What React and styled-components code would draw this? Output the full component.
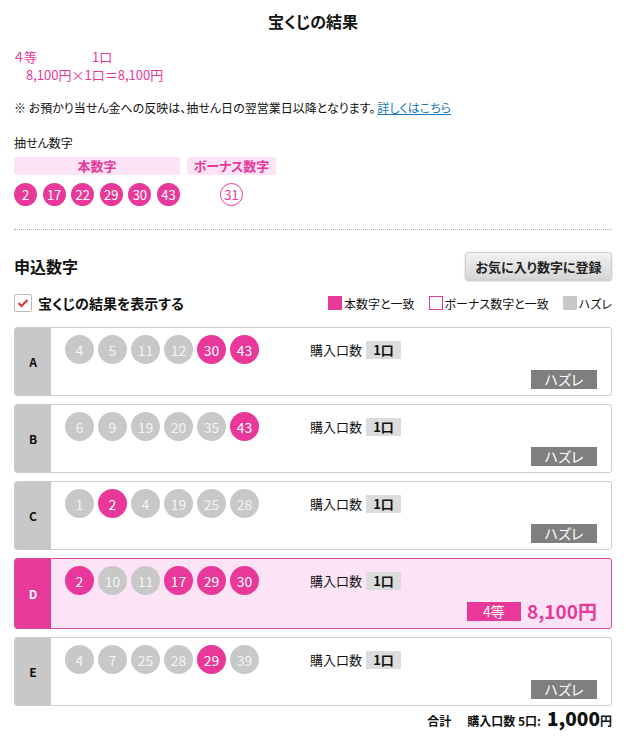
import React from "react";
import styled, { createGlobalStyle } from "styled-components";

const PINK = "#e8399a";
const LIGHT_PINK = "#fde3f6";

const GlobalStyle = createGlobalStyle`
    html, body {
        margin: 0;
        padding: 0;
        background: #fff;
    }
    body {
        font-family: "Noto Sans CJK JP", "Noto Sans", sans-serif;
        font-feature-settings: "palt";
        color: #111;
    }
`;

const Page = styled.div`
    width: 598px;
    padding: 10px 14px 8px;
`;

const Title = styled.h1`
    margin: 0;
    font-size: 16px;
    line-height: 22px;
    font-weight: 700;
    text-align: center;
`;

const Prize = styled.div`
    margin-top: 16px;
    color: ${PINK};
    font-size: 13px;
    line-height: 18px;
`;

const PrizeHead = styled.div`
    display: grid;
    grid-template-columns: 78px auto;
`;

const PrizeCalc = styled.div`
    padding-left: 12px;
`;

const Note = styled.p`
    margin: 16px 0 0;
    font-size: 12px;
    line-height: 16px;
    & a {
        color: #1a78b8;
        text-decoration: underline;
        margin-left: 2px;
    }
`;

const DrawLabel = styled.div`
    margin-top: 19px;
    font-size: 12px;
    line-height: 16px;
`;

const DrawGrid = styled.div`
    margin-top: 6px;
    display: grid;
    grid-template-columns: 166px 89px;
    column-gap: 7px;
    row-gap: 8px;
`;

const GroupLabel = styled.div`
    height: 18px;
    line-height: 18px;
    border-radius: 3px;
    background: ${LIGHT_PINK};
    color: ${PINK};
    font-size: 13px;
    font-weight: 700;
    text-align: center;
`;

const DrawBalls = styled.div`
    display: flex;
    justify-content: ${(p) => (p.$center ? "center" : "space-between")};
`;

const DrawBall = styled.span`
    width: 23px;
    height: 23px;
    box-sizing: border-box;
    border-radius: 50%;
    display: flex;
    align-items: center;
    justify-content: center;
    font-size: 13px;
    background: ${(p) => (p.$outline ? "#fff" : PINK)};
    color: ${(p) => (p.$outline ? PINK : "#fff")};
    border: ${(p) => (p.$outline ? `1px solid ${PINK}` : "none")};
`;

const Divider = styled.hr`
    margin: 23px 0 0;
    border: none;
    border-top: 1px dotted #aaa;
`;

const SectionHead = styled.div`
    margin-top: 22px;
    display: flex;
    justify-content: space-between;
    align-items: center;
`;

const SectionTitle = styled.h2`
    margin: 0;
    font-size: 16px;
    font-weight: 700;
`;

const FavButton = styled.button`
    width: 147px;
    height: 28px;
    border: 1px solid #cfcfcf;
    border-radius: 3px;
    background: linear-gradient(#f2f2f2, #d6d6d6);
    box-shadow: 0 1px 2px rgba(0, 0, 0, 0.25);
    font-family: inherit;
    font-feature-settings: "palt";
    font-size: 13px;
    font-weight: 700;
    color: #222;
    padding: 0;
`;

const OptionRow = styled.div`
    margin-top: 13px;
    display: flex;
    justify-content: space-between;
    align-items: center;
`;

const CheckLabel = styled.label`
    display: flex;
    align-items: center;
    gap: 6px;
    font-size: 14px;
    font-weight: 700;
`;

const CheckBox = styled.span`
    width: 18px;
    height: 18px;
    box-sizing: border-box;
    border: 1px solid #bbb;
    border-radius: 2px;
    background: #fff;
    display: flex;
    align-items: center;
    justify-content: center;
`;

const Legend = styled.div`
    display: flex;
    align-items: center;
    gap: 14px;
    font-size: 12px;
`;

const LegendItem = styled.span`
    display: flex;
    align-items: center;
    gap: 2px;
`;

const Swatch = styled.span`
    width: 14px;
    height: 14px;
    box-sizing: border-box;
    background: ${(p) => (p.$kind === "main" ? PINK : p.$kind === "bonus" ? "#fff" : "#c8c8c8")};
    border: ${(p) => (p.$kind === "bonus" ? `1px solid ${PINK}` : "none")};
`;

const Cards = styled.div`
    margin-top: 14px;
    display: flex;
    flex-direction: column;
    gap: 8px;
`;

const Card = styled.div`
    display: flex;
    border: 1px solid ${(p) => (p.$win ? "#d25095" : "#cccccc")};
    border-radius: 3px;
    overflow: hidden;
    background: ${(p) => (p.$win ? LIGHT_PINK : "#fff")};
`;

const Band = styled.div`
    width: 36px;
    flex: none;
    display: flex;
    align-items: center;
    justify-content: center;
    background: ${(p) => (p.$win ? PINK : "#c8c8c8")};
    color: ${(p) => (p.$win ? "#fff" : "#111")};
    font-size: 12px;
    font-weight: 700;
`;

const CardBody = styled.div`
    flex: 1;
    padding: 7px 14px 6px 14px;
    display: flex;
    flex-direction: column;
    gap: 5px;
`;

const TopRow = styled.div`
    display: flex;
    align-items: center;
`;

const Balls = styled.div`
    display: flex;
    gap: 4px;
    width: 245px;
`;

const Ball = styled.span`
    width: 29px;
    height: 29px;
    border-radius: 50%;
    display: flex;
    align-items: center;
    justify-content: center;
    font-size: 14px;
    background: ${(p) => (p.$hit ? PINK : "#c8c8c8")};
    color: ${(p) => (p.$hit ? "#fff" : "#f4f4f4")};
`;

const Purchase = styled.div`
    display: flex;
    align-items: center;
    gap: 4px;
    font-size: 13px;
`;

const CountBadge = styled.span`
    width: 35px;
    height: 18px;
    line-height: 18px;
    text-align: center;
    background: #dcdcdc;
    font-weight: 700;
    font-size: 13px;
`;

const ResultRow = styled.div`
    display: flex;
    justify-content: flex-end;
    align-items: center;
    gap: 6px;
    min-height: 20px;
`;

const Tag = styled.span`
    width: ${(p) => (p.$win ? "54px" : "66px")};
    height: 19px;
    line-height: 19px;
    text-align: center;
    color: #fff;
    font-size: 14px;
    background: ${(p) => (p.$win ? PINK : "#7f7f7f")};
`;

const Amount = styled.span`
    color: ${PINK};
    font-size: 19px;
    font-weight: 700;
    line-height: 22px;
`;

const Total = styled.div`
    margin-top: 1px;
    display: flex;
    justify-content: flex-end;
    align-items: baseline;
    font-size: 12px;
    line-height: 22px;
    font-weight: 700;
    & b {
        font-size: 19px;
        margin-left: 6px;
    }
    & span {
        margin-left: 16px;
    }
`;

const MAIN = [2, 17, 22, 29, 30, 43];
const BONUS = 31;

const LINES = [
    { id: "A", nums: [4, 5, 11, 12, 30, 43] },
    { id: "B", nums: [6, 9, 19, 20, 35, 43] },
    { id: "C", nums: [1, 2, 4, 19, 25, 28] },
    { id: "D", nums: [2, 10, 11, 17, 29, 30], prize: "4等", amount: "8,100円" },
    { id: "E", nums: [4, 7, 25, 28, 29, 39] },
];

function Check() {
    return (
        <svg width="12" height="10" viewBox="0 0 12 10">
            <path d="M1.5 5 L4.5 8 L10.5 2" fill="none" stroke="#d8302e" strokeWidth="2" />
        </svg>
    );
}

export default function App() {
    return (
        <Page>
            <GlobalStyle />
            <Title>宝くじの結果</Title>
            <Prize>
                <PrizeHead>
                    <span>４等</span>
                    <span>1口</span>
                </PrizeHead>
                <PrizeCalc>8,100円×1口＝8,100円</PrizeCalc>
            </Prize>
            <Note>
                ※ お預かり当せん金への反映は、抽せん日の翌営業日以降となります。
                <a href="#">詳しくはこちら</a>
            </Note>
            <DrawLabel>抽せん数字</DrawLabel>
            <DrawGrid>
                <GroupLabel>本数字</GroupLabel>
                <GroupLabel>ボーナス数字</GroupLabel>
                <DrawBalls>
                    {MAIN.map((n) => (
                        <DrawBall key={n}>{n}</DrawBall>
                    ))}
                </DrawBalls>
                <DrawBalls $center>
                    <DrawBall $outline>{BONUS}</DrawBall>
                </DrawBalls>
            </DrawGrid>
            <Divider />
            <SectionHead>
                <SectionTitle>申込数字</SectionTitle>
                <FavButton>お気に入り数字に登録</FavButton>
            </SectionHead>
            <OptionRow>
                <CheckLabel>
                    <CheckBox>
                        <Check />
                    </CheckBox>
                    宝くじの結果を表示する
                </CheckLabel>
                <Legend>
                    <LegendItem>
                        <Swatch $kind="main" />
                        本数字と一致
                    </LegendItem>
                    <LegendItem>
                        <Swatch $kind="bonus" />
                        ボーナス数字と一致
                    </LegendItem>
                    <LegendItem>
                        <Swatch $kind="miss" />
                        ハズレ
                    </LegendItem>
                </Legend>
            </OptionRow>
            <Cards>
                {LINES.map((line) => {
                    const win = !!line.prize;
                    return (
                        <Card key={line.id} $win={win}>
                            <Band $win={win}>{line.id}</Band>
                            <CardBody>
                                <TopRow>
                                    <Balls>
                                        {line.nums.map((n) => (
                                            <Ball key={n} $hit={MAIN.includes(n)}>
                                                {n}
                                            </Ball>
                                        ))}
                                    </Balls>
                                    <Purchase>
                                        購入口数<CountBadge>1口</CountBadge>
                                    </Purchase>
                                </TopRow>
                                <ResultRow>
                                    {win ? (
                                        <>
                                            <Tag $win>{line.prize}</Tag>
                                            <Amount>{line.amount}</Amount>
                                        </>
                                    ) : (
                                        <Tag>ハズレ</Tag>
                                    )}
                                </ResultRow>
                            </CardBody>
                        </Card>
                    );
                })}
            </Cards>
            <Total>
                合計<span>購入口数 5口:</span>
                <b>1,000</b>円
            </Total>
        </Page>
    );
}
